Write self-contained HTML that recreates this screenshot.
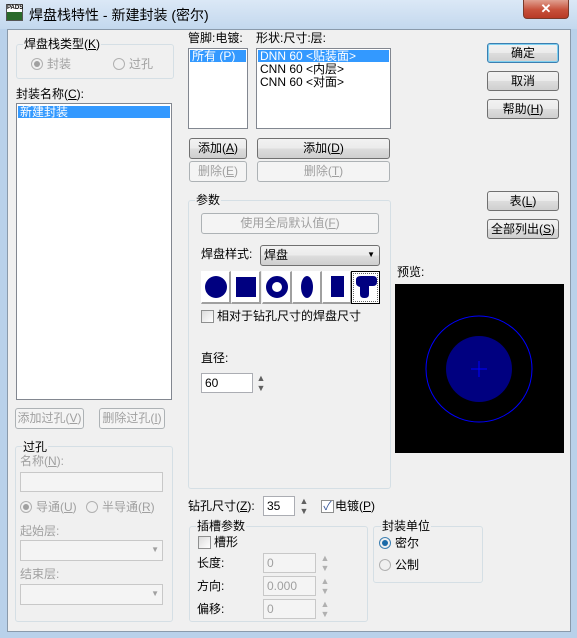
<!DOCTYPE html>
<html><head><meta charset="utf-8"><style>
*{box-sizing:border-box}
body{margin:0;width:577px;height:638px;overflow:hidden;background:#b9d1ea;font-family:"Liberation Sans","Noto Sans CJK SC",sans-serif;font-size:12px;color:#000;position:relative}
.a{position:absolute;white-space:nowrap}
.t{position:absolute;white-space:nowrap;line-height:13px}
.dis{color:#a0a0a0}
.btn{position:absolute;border:1px solid #707070;border-radius:3px;background:linear-gradient(#f2f2f2 0,#ebebeb 50%,#dddddd 51%,#cfcfcf 100%);text-align:center;line-height:18px}
.btnd{position:absolute;border:1px solid #adb2b5;border-radius:3px;background:#f4f4f4;color:#a0a0a0;text-align:center;line-height:18px}
.list{position:absolute;background:#fff;border:1px solid #828790}
.sel{position:absolute;background:#3399ff;color:#fff;line-height:12px;padding-left:2px}
.grp{position:absolute;border:1px solid #d5dfe5;border-radius:3px}
.lg{position:absolute;background:#f0f0f0;padding:0 1px;line-height:13px}
.inp{position:absolute;background:#fff;border:1px solid #abadb3;padding-left:3px;line-height:18px}
.inpd{position:absolute;background:#f4f4f4;border:1px solid #c8c8c8;color:#a0a0a0;padding-left:3px;line-height:18px}
.radio{position:absolute;width:12px;height:12px;border-radius:50%;border:1px solid #b0b0b0;background:#f0f0f0}
.cb{position:absolute;width:13px;height:13px;border:1px solid #8e8f8f;background:linear-gradient(135deg,#dcdcdc,#fff)}
.spin{position:absolute;width:10px;font-size:9px;line-height:10px;color:#606060;text-align:center}
.sb{position:absolute;width:30px;height:33px;background:#fff;border:1px solid #fff;border-right:2px solid #a0a0a0;border-bottom:2px solid #a0a0a0}
</style></head><body>
<div class="a" style="left:0;top:0;width:577px;height:29px;background:linear-gradient(#dbe8f6,#c3d8ee)"></div>
<div class="a" style="left:6px;top:4px;width:17px;height:17px;background:#2a6a2a;border:1px solid #555"><div style="background:#fff;color:#000;font-size:6px;line-height:7px;height:7px;font-weight:bold;text-align:center">PADS</div></div>
<div class="a" style="left:29px;top:7px;font-size:14px;line-height:16px">焊盘栈特性 - 新建封装 (密尔)</div>
<div class="a" style="left:523px;top:0;width:46px;height:19px;border:1px solid #7a3a2a;border-top:none;border-radius:0 0 4px 4px;background:linear-gradient(#e0a090,#c7503a 55%,#b83a26);color:#fff;text-align:center;font-weight:bold;font-size:13px;line-height:18px">✕</div>
<div class="a" style="left:7px;top:29px;width:564px;height:603px;background:#f0f0f0;border:1px solid #8a9aab"></div>

<div class="grp" style="left:16px;top:44px;width:158px;height:35px"></div>
<div class="lg" style="left:23px;top:38px">焊盘栈类型(<u>K</u>)</div>
<div class="radio" style="left:31px;top:58px"><div style="margin:2px;width:6px;height:6px;border-radius:50%;background:#a0a0a0"></div></div>
<div class="t dis" style="left:47px;top:58px">封装</div>
<div class="radio" style="left:113px;top:58px"></div>
<div class="t dis" style="left:129px;top:58px">过孔</div>

<div class="t" style="left:16px;top:88px">封装名称(<u>C</u>):</div>
<div class="list" style="left:16px;top:103px;width:156px;height:297px"><div class="sel" style="left:1px;top:2px;width:152px">新建封装</div></div>

<div class="btnd" style="left:15px;top:408px;width:69px;height:21px">添加过孔(<u>V</u>)</div>
<div class="btnd" style="left:99px;top:408px;width:66px;height:21px">删除过孔(<u>I</u>)</div>

<div class="grp" style="left:15px;top:446px;width:158px;height:176px"></div>
<div class="lg" style="left:22px;top:441px">过孔</div>
<div class="t dis" style="left:20px;top:455px">名称(<u>N</u>):</div>
<div class="inpd" style="left:20px;top:472px;width:143px;height:20px"></div>
<div class="radio" style="left:20px;top:501px"><div style="margin:2px;width:6px;height:6px;border-radius:50%;background:#a0a0a0"></div></div>
<div class="t dis" style="left:36px;top:501px">导通(<u>U</u>)</div>
<div class="radio" style="left:86px;top:501px"></div>
<div class="t dis" style="left:102px;top:501px">半导通(<u>R</u>)</div>
<div class="t dis" style="left:20px;top:525px">起始层:</div>
<div class="inpd" style="left:20px;top:540px;width:143px;height:21px"><span style="position:absolute;right:3px;top:0;font-size:8px">▼</span></div>
<div class="t dis" style="left:20px;top:568px">结束层:</div>
<div class="inpd" style="left:20px;top:584px;width:143px;height:21px"><span style="position:absolute;right:3px;top:0;font-size:8px">▼</span></div>

<div class="t" style="left:188px;top:32px">管脚:电镀:</div>
<div class="list" style="left:188px;top:48px;width:60px;height:81px"><div class="sel" style="left:1px;top:1px;width:56px">所有 (P)</div></div>
<div class="t" style="left:256px;top:32px">形状:尺寸:层:</div>
<div class="list" style="left:256px;top:48px;width:135px;height:81px">
<div class="sel" style="left:1px;top:1px;width:131px">DNN 60 &lt;贴装面&gt;</div>
<div class="t" style="left:3px;top:14px">CNN 60 &lt;内层&gt;</div>
<div class="t" style="left:3px;top:27px">CNN 60 &lt;对面&gt;</div></div>

<div class="btn" style="left:189px;top:138px;width:58px;height:21px">添加(<u>A</u>)</div>
<div class="btnd" style="left:189px;top:161px;width:58px;height:21px">删除(<u>E</u>)</div>
<div class="btn" style="left:257px;top:138px;width:133px;height:21px">添加(<u>D</u>)</div>
<div class="btnd" style="left:257px;top:161px;width:133px;height:21px">删除(<u>T</u>)</div>

<div class="grp" style="left:188px;top:200px;width:203px;height:289px"></div>
<div class="lg" style="left:195px;top:194px">参数</div>
<div class="btnd" style="left:201px;top:213px;width:178px;height:21px">使用全局默认值(<u>F</u>)</div>
<div class="t" style="left:201px;top:248px">焊盘样式:</div>
<div class="btn" style="left:260px;top:245px;width:120px;height:21px;text-align:left;padding-left:3px">焊盘<span style="position:absolute;right:4px;top:0;font-size:8px">▼</span></div>
<div class="sb" style="left:201px;top:271px"><div style="position:absolute;left:3px;top:4px;width:22px;height:22px;border-radius:50%;background:#000080"></div></div>
<div class="sb" style="left:231px;top:271px"><div style="position:absolute;left:4px;top:5px;width:20px;height:20px;background:#000080"></div></div>
<div class="sb" style="left:262px;top:271px"><div style="position:absolute;left:3px;top:4px;width:22px;height:22px;border-radius:50%;border:6px solid #000080;background:#fff"></div></div>
<div class="sb" style="left:292px;top:271px"><div style="position:absolute;left:8px;top:4px;width:12px;height:22px;border-radius:50%;background:#000080"></div></div>
<div class="sb" style="left:322px;top:271px"><div style="position:absolute;left:8px;top:4px;width:13px;height:21px;background:#000080"></div></div>
<div class="a" style="left:351px;top:271px;width:29px;height:33px;border:1px solid #000;outline:1px dotted #666;outline-offset:-3px;background:#fff"><svg width="27" height="31" style="position:absolute;left:0;top:0"><path d="M4 8 Q4 4 9 4 L21 4 Q25 4 25 8 L25 10 Q25 14 21 14 L17 14 L17 22 Q17 26 13 26 L12 26 Q8 26 8 22 L8 15 Q4 14 4 11 Z" fill="#000080"/></svg></div>
<div class="cb" style="left:201px;top:310px"></div>
<div class="t" style="left:217px;top:310px">相对于钻孔尺寸的焊盘尺寸</div>
<div class="t" style="left:201px;top:352px">直径:</div>
<div class="inp" style="left:201px;top:373px;width:52px;height:20px">60</div>
<div class="spin" style="left:256px;top:373px">▲<br>▼</div>

<div class="t" style="left:397px;top:266px">预览:</div>
<svg class="a" style="left:395px;top:284px" width="169" height="169"><rect width="169" height="169" fill="#000"/><circle cx="84" cy="85" r="53" fill="none" stroke="#0000ff" stroke-width="1"/><circle cx="84" cy="85" r="33" fill="#000080"/><path d="M76 85H92M84 77V93" stroke="#0000ff"/></svg>

<div class="t" style="left:188px;top:500px">钻孔尺寸(<u>Z</u>):</div>
<div class="inp" style="left:263px;top:496px;width:32px;height:20px">35</div>
<div class="spin" style="left:299px;top:496px">▲<br>▼</div>
<div class="cb" style="left:321px;top:500px;background:#fff;color:#3c5a9a;font-size:12px;line-height:11px;text-align:center">✓</div>
<div class="t" style="left:335px;top:500px">电镀(<u>P</u>)</div>

<div class="grp" style="left:189px;top:526px;width:179px;height:96px"></div>
<div class="lg" style="left:196px;top:520px">插槽参数</div>
<div class="cb" style="left:198px;top:536px"></div>
<div class="t" style="left:214px;top:536px">槽形</div>
<div class="t" style="left:197px;top:557px">长度:</div>
<div class="inpd" style="left:263px;top:553px;width:53px;height:20px">0</div>
<div class="spin" style="left:320px;top:553px;color:#b0b0b0">▲<br>▼</div>
<div class="t" style="left:197px;top:580px">方向:</div>
<div class="inpd" style="left:263px;top:576px;width:53px;height:20px">0.000</div>
<div class="spin" style="left:320px;top:576px;color:#b0b0b0">▲<br>▼</div>
<div class="t" style="left:197px;top:603px">偏移:</div>
<div class="inpd" style="left:263px;top:599px;width:53px;height:20px">0</div>
<div class="spin" style="left:320px;top:599px;color:#b0b0b0">▲<br>▼</div>

<div class="grp" style="left:373px;top:526px;width:110px;height:57px"></div>
<div class="lg" style="left:381px;top:520px">封装单位</div>
<div class="radio" style="left:379px;top:537px;border-color:#3c7fb1"><div style="margin:2px;width:6px;height:6px;border-radius:50%;background:#1a6aa8"></div></div>
<div class="t" style="left:395px;top:537px">密尔</div>
<div class="radio" style="left:379px;top:559px"></div>
<div class="t" style="left:395px;top:559px">公制</div>

<div class="btn" style="left:487px;top:43px;width:72px;height:20px;border-color:#3c7fb1;box-shadow:inset 0 0 0 1px #7fd0f0">确定</div>
<div class="btn" style="left:487px;top:71px;width:72px;height:20px">取消</div>
<div class="btn" style="left:487px;top:99px;width:72px;height:20px">帮助(<u>H</u>)</div>
<div class="btn" style="left:487px;top:191px;width:72px;height:20px">表(<u>L</u>)</div>
<div class="btn" style="left:487px;top:219px;width:72px;height:20px">全部列出(<u>S</u>)</div>
</body></html>
